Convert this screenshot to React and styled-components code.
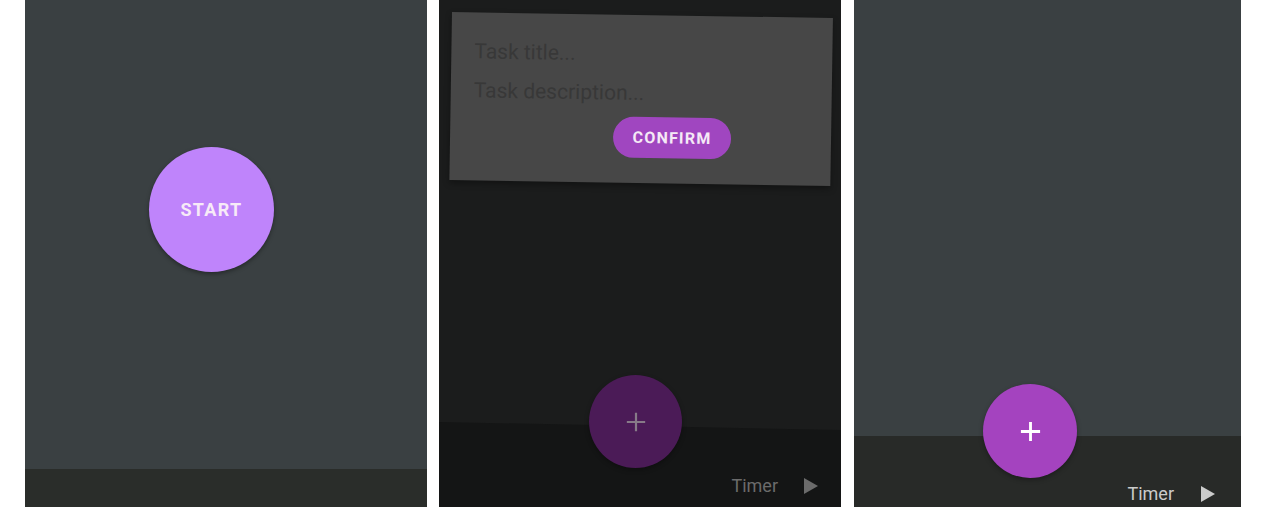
import React from "react";
import styled, { createGlobalStyle } from "styled-components";

const GlobalStyle = createGlobalStyle`
  *, *::before, *::after { box-sizing: border-box; }
  html, body { margin: 0; padding: 0; background: #ffffff; }
  body { font-family: Roboto, "Noto Sans", Arial, sans-serif; overflow: hidden; }
`;

const Page = styled.div`
  display: flex;
  height: 507px;
  padding-left: 25px;
  background: #ffffff;
`;

const Phone = styled.div`
  position: relative;
  display: flex;
  flex-direction: column;
  width: ${(p) => p.$width}px;
  margin-left: ${(p) => p.$gap || 0}px;
  background: ${(p) => p.$bg};
  overflow: hidden;
`;

const Content = styled.div`
  flex: 1;
  display: flex;
  flex-direction: column;
  align-items: flex-start;
  padding: ${(p) => p.$pad || "0"};
`;

const Bar = styled.div`
  height: ${(p) => p.$height}px;
  display: flex;
  justify-content: flex-end;
  align-items: flex-end;
  padding: 0 ${(p) => p.$padRight || 24}px ${(p) => p.$padBottom || 0}px 0;
  background: ${(p) => p.$bg};
  clip-path: ${(p) => (p.$tilt ? "polygon(0 0, 100% 8px, 100% 100%, 0 100%)" : "none")};
`;

const TimerRow = styled.div`
  display: flex;
  align-items: center;
  gap: ${(p) => p.$gap}px;
`;

const TimerLabel = styled.span`
  font-size: 18px;
  line-height: 21px;
  color: ${(p) => p.$color};
`;

// big START circle on the first screen
const StartButton = styled.button`
  width: 125px;
  height: 125px;
  border-radius: 50%;
  border: none;
  background: #bf84fb;
  color: #f7eaf7;
  font-family: Roboto, sans-serif;
  font-weight: 700;
  font-size: 18px;
  letter-spacing: 1.3px;
  box-shadow: 0 2px 4px rgba(0, 0, 0, 0.35);
  cursor: pointer;
`;

const Fab = styled.button`
  position: absolute;
  left: ${(p) => p.$left}px;
  top: ${(p) => p.$top}px;
  width: ${(p) => p.$size}px;
  height: ${(p) => p.$size}px;
  border-radius: 50%;
  border: none;
  display: flex;
  align-items: center;
  justify-content: center;
  background: ${(p) => p.$bg};
  box-shadow: 0 2px 5px rgba(0, 0, 0, 0.3);
  cursor: pointer;
`;

const Card = styled.div`
  width: 381px;
  height: 168px;
  margin: 12px 0 0 13px;
  padding: 20px 0 0 23px;
  background: #474747;
  transform: rotate(0.9deg);
  transform-origin: top left;
  box-shadow: 0 3px 6px rgba(0, 0, 0, 0.35);
  display: flex;
  flex-direction: column;
`;

const Field = styled.input`
  width: 320px;
  height: 39px;
  padding: 0;
  border: none;
  outline: none;
  background: transparent;
  font-family: Roboto, sans-serif;
  font-size: 21px;
  line-height: 39px;
  color: #cfcfcf;

  &::placeholder {
    color: #383838;
  }
`;

const ConfirmButton = styled.button`
  align-self: flex-start;
  margin: 4px 0 0 140px;
  width: 118px;
  height: 41px;
  border: none;
  border-radius: 21px;
  background: #a046c0;
  color: #f5e9f6;
  font-family: Roboto, sans-serif;
  font-weight: 700;
  font-size: 16px;
  letter-spacing: 1.2px;
  cursor: pointer;
`;

const Plus = ({ color, size = 24, stroke = 3 }) => (
  <svg width={size} height={size} viewBox="0 0 24 24">
    <path d="M12 2v20M2 12h20" stroke={color} strokeWidth={stroke} fill="none" />
  </svg>
);

const Play = ({ color }) => (
  <svg width="14" height="16" viewBox="0 0 14 16">
    <polygon points="0,0 14,8 0,16" fill={color} />
  </svg>
);

function Timer({ color, gap }) {
  return (
    <TimerRow $gap={gap}>
      <TimerLabel $color={color}>Timer</TimerLabel>
      <Play color={color} />
    </TimerRow>
  );
}

export default function App() {
  return (
    <>
      <GlobalStyle />
      <Page>
        <Phone $width={402} $bg="#3a4042">
          <Content $pad="147px 0 0 124px">
            <StartButton>START</StartButton>
          </Content>
          <Bar $height={38} $bg="#2a2d2a" />
        </Phone>

        <Phone $width={402} $gap={12} $bg="#1b1c1c">
          <Content>
            <Card>
              <Field placeholder="Task title..." />
              <Field placeholder="Task description..." />
              <ConfirmButton>CONFIRM</ConfirmButton>
            </Card>
          </Content>
          <Bar $height={85} $bg="#141515" $tilt $padRight={23} $padBottom={11}>
            <Timer color="#6b6b6b" gap={26} />
          </Bar>
          <Fab $left={150} $top={375} $size={93} $bg="#4b1b57">
            <Plus color="#877a88" size={22} stroke={2.4} />
          </Fab>
        </Phone>

        <Phone $width={387} $gap={13} $bg="#3a4042">
          <Content />
          <Bar $height={71} $bg="#282a28" $padRight={26} $padBottom={3}>
            <Timer color="#cbcbcb" gap={27} />
          </Bar>
          <Fab $left={129} $top={384} $size={94} $bg="#a443bf">
            <Plus color="#ffffff" size={23} stroke={3} />
          </Fab>
        </Phone>
      </Page>
    </>
  );
}
